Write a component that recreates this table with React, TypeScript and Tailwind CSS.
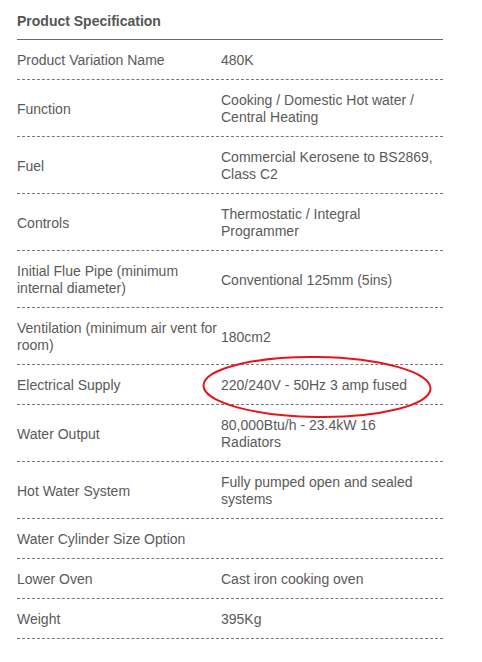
import React from "react";

const rows: { label: React.ReactNode; value: React.ReactNode; tall?: boolean }[] = [
  { label: "Product Variation Name", value: "480K" },
  { label: "Function", value: <>Cooking / Domestic Hot water /<br />Central Heating</>, tall: true },
  { label: "Fuel", value: <>Commercial Kerosene to BS2869,<br />Class C2</>, tall: true },
  { label: "Controls", value: <>Thermostatic / Integral<br />Programmer</>, tall: true },
  { label: <>Initial Flue Pipe (minimum<br />internal diameter)</>, value: "Conventional 125mm (5ins)", tall: true },
  { label: <>Ventilation (minimum air vent for<br />room)</>, value: "180cm2", tall: true },
  { label: "Electrical Supply", value: "220/240V - 50Hz 3 amp fused" },
  { label: "Water Output", value: <>80,000Btu/h - 23.4kW 16<br />Radiators</>, tall: true },
  { label: "Hot Water System", value: <>Fully pumped open and sealed<br />systems</>, tall: true },
  { label: "Water Cylinder Size Option", value: "" },
  { label: "Lower Oven", value: "Cast iron cooking oven" },
  { label: "Weight", value: "395Kg" },
];

export default function App() {
  return (
    <div
      className="relative w-[482px] h-[662px] bg-white text-[#5a5a5a] overflow-hidden"
      style={{ fontFamily: '"Liberation Sans", Arial, sans-serif' }}
    >
      <div className="ml-[17px] w-[426px]">
        <div className="pt-[13px] pb-[9px] border-b border-[#6b6b6b] text-[14px] leading-[17px] font-bold text-[#555]">
          Product Specification
        </div>
        {rows.map((r, i) => (
          <div
            key={i}
            className={`flex items-center pt-[2px] border-b border-dashed border-[#777] text-[14px] leading-[17px] whitespace-nowrap ${r.tall ? "h-[57px]" : "h-[40px]"}`}
          >
            <div className="w-[204px] shrink-0">{r.label}</div>
            <div className="flex-1">{r.value}</div>
          </div>
        ))}
      </div>
      <svg
        className="absolute left-0 top-0 pointer-events-none"
        width="482"
        height="662"
        viewBox="0 0 482 662"
      >
        <ellipse
          cx="317"
          cy="387"
          rx="113.5"
          ry="30"
          fill="none"
          stroke="#e8141b"
          strokeWidth="2"
          transform="rotate(0.8 317 387)"
        />
      </svg>
    </div>
  );
}
